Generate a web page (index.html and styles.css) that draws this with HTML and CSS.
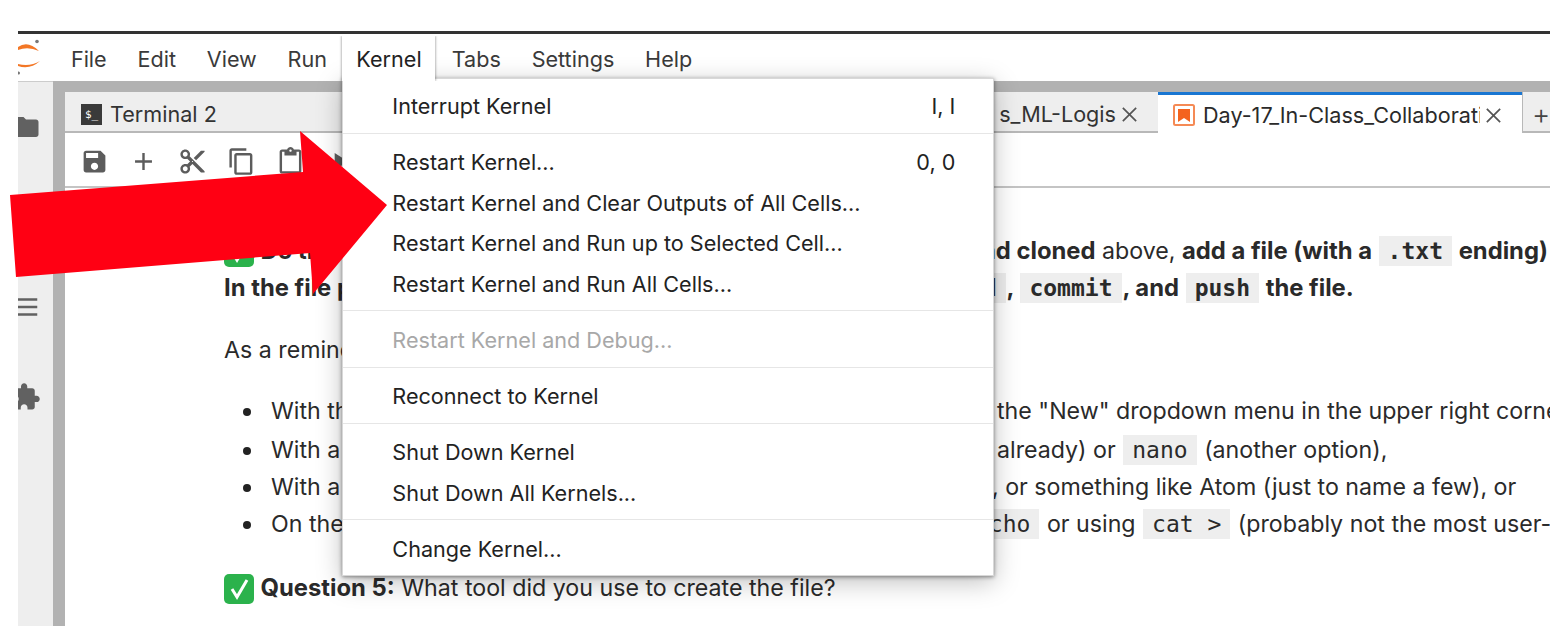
FILE: index.html
```html
<!DOCTYPE html>
<html lang="en">
<head>
<meta charset="utf-8">
<title>JupyterLab Kernel menu</title>
<link rel="stylesheet" href="styles.css">
</head>
<body>
<div class="page">
  <div class="app">
    <header class="menubar">
      <div class="logo">
        <svg viewBox="0 0 38 44" width="38" height="44">
          <path class="logo-arc" d="M0 11Q10 4 21 15Q10 10 0 14Z"/>
          <path class="logo-arc" d="M22 25Q12 34 0 30L0 28Q12 31 22 25Z"/>
          <circle class="logo-dot" cx="19" cy="5.5" r="1.8"/>
          <circle class="logo-dot" cx="0.5" cy="37" r="1.5"/>
        </svg>
      </div>
      <div class="menu-item">File</div>
      <div class="menu-item">Edit</div>
      <div class="menu-item">View</div>
      <div class="menu-item">Run</div>
      <div class="kernel">
        <div class="kernel-label">Kernel</div>
        <div class="dropdown">
          <div class="entry"><span>Interrupt Kernel</span><span>I, I</span></div>
          <div class="sep"></div>
          <div class="entry"><span>Restart Kernel...</span><span>0, 0</span></div>
          <div class="entry"><span>Restart Kernel and Clear Outputs of All Cells...</span></div>
          <div class="entry"><span>Restart Kernel and Run up to Selected Cell...</span></div>
          <div class="entry"><span>Restart Kernel and Run All Cells...</span></div>
          <div class="sep"></div>
          <div class="entry disabled"><span>Restart Kernel and Debug...</span></div>
          <div class="sep"></div>
          <div class="entry"><span>Reconnect to Kernel</span></div>
          <div class="sep"></div>
          <div class="entry"><span>Shut Down Kernel</span></div>
          <div class="entry"><span>Shut Down All Kernels...</span></div>
          <div class="sep"></div>
          <div class="entry"><span>Change Kernel...</span></div>
        </div>
      </div>
      <div class="menu-item">Tabs</div>
      <div class="menu-item">Settings</div>
      <div class="menu-item">Help</div>
    </header>
    <div class="workspace">
      <aside class="sidebar">
        <div class="side-slot"><svg class="side-icon" viewBox="0 0 24 24"><path d="M10 4H4c-1.1 0-1.99.9-1.99 2L2 18c0 1.1.9 2 2 2h16c1.1 0 2-.9 2-2V8c0-1.1-.9-2-2-2h-8l-2-2z"/></svg></div>
        <div class="side-slot"></div>
        <div class="side-slot"><svg class="side-icon" viewBox="0 0 24 24"><path d="M3 5h18v2H3zM3 11h18v2H3zM3 17h18v2H3z"/></svg></div>
        <div class="side-slot"><svg class="side-icon" viewBox="0 0 24 24"><path d="M20.5 11H19V7c0-1.1-.9-2-2-2h-4V3.5C13 2.12 11.88 1 10.5 1S8 2.12 8 3.5V5H4c-1.1 0-1.99.9-1.99 2v3.8H3.5c1.49 0 2.7 1.21 2.7 2.7s-1.21 2.7-2.7 2.7H2V20c0 1.1.9 2 2 2h3.8v-1.5c0-1.49 1.21-2.7 2.7-2.7 1.49 0 2.7 1.21 2.7 2.7V22H17c1.1 0 2-.9 2-2v-4h1.5c1.38 0 2.5-1.12 2.5-2.5S21.88 11 20.5 11z"/></svg></div>
      </aside>
      <main class="main">
        <div class="tabs">
          <div class="tab tab-terminal">
            <span class="term-icon">$_</span>
            <span>Terminal 2</span>
          </div>
          <div class="tab tab-middle">
            <span class="tab-name">s_ML-Logis</span>
            <svg class="tab-x" viewBox="0 0 20 20"><path d="M3 3l14 14M17 3L3 17"/></svg>
          </div>
          <div class="tab tab-active">
            <svg class="nb-icon" viewBox="0 0 22 22"><rect x="1" y="1" width="20" height="20" rx="1.5"/><path d="M5 5h12v13l-6-4-6 4z"/></svg>
            <span class="tab-active-name">Day-17_In-Class_Collaboration</span>
            <svg class="tab-x" viewBox="0 0 20 20"><path d="M3 3l14 14M17 3L3 17"/></svg>
          </div>
          <div class="tab tab-add">+</div>
        </div>
        <div class="toolbar">
          <svg class="tool" viewBox="0 0 24 24"><path d="M17 3H5c-1.11 0-2 .9-2 2v14c0 1.1.89 2 2 2h14c1.1 0 2-.9 2-2V7l-4-4zm-5 16c-1.66 0-3-1.34-3-3s1.34-3 3-3 3 1.34 3 3-1.34 3-3 3zm3-10H5V5h10v4z"/></svg>
          <svg class="tool" viewBox="0 0 24 24"><path d="M19 13h-6v6h-2v-6H5v-2h6V5h2v6h6v2z"/></svg>
          <svg class="tool" viewBox="0 0 24 24"><path d="M9.64 7.64c.23-.5.36-1.05.36-1.64 0-2.21-1.79-4-4-4S2 3.79 2 6s1.79 4 4 4c.59 0 1.14-.13 1.64-.36L10 12l-2.36 2.36C7.14 14.13 6.59 14 6 14c-2.21 0-4 1.79-4 4s1.79 4 4 4 4-1.79 4-4c0-.59-.13-1.14-.36-1.64L12 14l7 7h3v-1L9.64 7.64zM6 8c-1.1 0-2-.89-2-2s.9-2 2-2 2 .89 2 2-.9 2-2 2zm0 12c-1.1 0-2-.89-2-2s.9-2 2-2 2 .89 2 2-.9 2-2 2zm6-7.5c-.28 0-.5-.22-.5-.5s.22-.5.5-.5.5.22.5.5-.22.5-.5.5zM19 3l-6 6 2 2 7-7V3z"/></svg>
          <svg class="tool" viewBox="0 0 24 24"><path d="M16 1H4c-1.1 0-2 .9-2 2v14h2V3h12V1zm3 4H8c-1.1 0-2 .9-2 2v14c0 1.1.9 2 2 2h11c1.1 0 2-.9 2-2V7c0-1.1-.9-2-2-2zm0 16H8V7h11v14z"/></svg>
          <svg class="tool" viewBox="0 0 24 24"><path d="M19 2h-4.18C14.4.84 13.3 0 12 0c-1.3 0-2.4.84-2.82 2H5c-1.1 0-2 .9-2 2v16c0 1.1.9 2 2 2h14c1.1 0 2-.9 2-2V4c0-1.1-.9-2-2-2zm-7 0c.55 0 1 .45 1 1s-.45 1-1 1-1-.45-1-1 .45-1 1-1zm7 18H5V4h2v3h10V4h2v16z"/></svg>
          <svg class="tool" viewBox="0 0 24 24"><path d="M8 5v14l11-7z"/></svg>
        </div>
        <article class="content">
          <div class="line">
            <div class="left"><svg class="check" viewBox="0 0 30 30"><rect width="30" height="30" rx="5"/><path d="M8 15l5 8L23 6"/></svg> <b>Do this: Using the repository you created and</b></div>
            <div class="right off-a"><b>nd cloned</b> above, <b>add a file (with a <code>.txt</code> ending)</b></div>
          </div>
          <div class="line">
            <div class="left"><b>In the file pane, use the terminal to</b></div>
            <div class="right off-b"><b><code>add</code>, <code>commit</code>, and <code>push</code> the file.</b></div>
          </div>
          <p class="para">As a reminder, there are many ways to create a file:</p>
          <ul class="bullets">
            <li class="line sub">
              <div class="left">With the JupyterLab launcher, or by using</div>
              <div class="right off-c">the "New" dropdown menu in the upper right corner of the page</div>
            </li>
            <li class="line sub chip-line">
              <div class="left">With a command line editor like vim (if you know it</div>
              <div class="right off-d">already) or <code>nano</code> (another option),</div>
            </li>
            <li class="line sub">
              <div class="left">With a text editor on your computer like VS Code</div>
              <div class="right off-e">, or something like Atom (just to name a few), or</div>
            </li>
            <li class="line sub">
              <div class="left">On the command line, by printing text with</div>
              <div class="right off-f"><code>echo</code> or using <code>cat &gt;</code> (probably not the most user-friendly)</div>
            </li>
          </ul>
          <p class="para question"><svg class="check" viewBox="0 0 30 30"><rect width="30" height="30" rx="5"/><path d="M8 15l5 8L23 6"/></svg> <b>Question 5:</b> What tool did you use to create the file?</p>
        </article>
      </main>
    </div>
  </div>
  <svg class="arrow" viewBox="0 0 400 300" width="400" height="300"><path d="M10 195L303 172L300 131L387 205L313 294L310 253L16 277Z"/></svg>
</div>
</body>
</html>
```
FILE: styles.css
```css
* { box-sizing: border-box; }
html, body { margin: 0; padding: 0; background: #fff; }
.page {
  position: relative;
  width: 1550px;
  height: 626px;
  overflow: hidden;
  padding: 31px 0 0 18px;
  font-family: Inter, "Noto Sans", sans-serif;
  font-size: 21.6px;
  color: #2a2a2a;
}
.app {
  display: flex;
  flex-direction: column;
  height: 595px;
  border-top: 3px solid #333;
}
.menubar {
  display: flex;
  align-items: stretch;
  height: 47px;
  flex: none;
  padding-top: 2px;
  background: #fff;
  position: relative;
  z-index: 3;
}
.logo { width: 37.5px; flex: none; overflow: hidden; }
.logo svg { display: block; }
.logo-arc { fill: #f37726; }
.logo-dot { fill: #777; }
.menu-item { padding: 0 15.4px; line-height: 47px; color: #3a3a3a; }
.kernel {
  position: relative;
  width: 93px;
  flex: none;
  margin-right: 1px;
}
.kernel-label {
  position: relative;
  z-index: 2;
  height: 45px;
  padding-left: 14px;
  line-height: 47px;
  background: #fff;
  color: #222;
  box-shadow: -1px 0 2px rgba(0,0,0,.25), 1px 0 2px rgba(0,0,0,.25);
  clip-path: inset(0 -6px 0 -6px);
}
.dropdown {
  position: absolute;
  z-index: 1;
  top: 42px;
  left: 0;
  width: 652px;
  height: 498px;
  padding: 7px 0;
  background: #fff;
  border: 1px solid #d8d8d8;
  box-shadow: 0 1px 4px rgba(0,0,0,.45), 0 6px 24px rgba(0,0,0,.25);
  color: #222;
}
.entry {
  display: flex;
  justify-content: space-between;
  height: 40.6px;
  line-height: 40.6px;
  padding: 0 38px 0 49px;
}
.entry.disabled { color: #a8a8a8; }
.sep { height: 1px; margin: 6px 0 8.5px; background: #e6e6e6; }
.workspace { display: flex; flex: 1; min-height: 0; }
.sidebar {
  width: 35px;
  flex: none;
  background: #eee;
  overflow: hidden;
  border-top: 1px solid #ccc;
}
.side-slot { height: 90px; display: flex; align-items: center; margin-left: -7px; }
.side-icon { width: 30px; height: 30px; fill: #616161; }
.main {
  flex: 1;
  min-width: 0;
  background: #fff;
  border-left: 12px solid #b2b2b2;
  display: flex;
  flex-direction: column;
  overflow: hidden;
}
.tabs {
  display: flex;
  height: 52px;
  flex: none;
  padding-top: 11px;
  background: #b2b2b2;
}
.tab {
  display: flex;
  align-items: center;
  background: #eee;
  border-bottom: 2px solid #b8b8b8;
  height: 41px;
  padding-top: 5px;
}
.tab-terminal { width: 280px; padding-left: 16px; gap: 8px; color: #333; }
.term-icon {
  width: 21px;
  height: 21px;
  background: #3a3a3a;
  color: #fff;
  font: 11px/21px "DejaVu Sans Mono", monospace;
  text-align: center;
}
.tab-middle { flex: 1; justify-content: flex-end; gap: 4px; padding-right: 19px; color: #333; min-width: 0; }
.tab-x { width: 19px; height: 19px; fill: none; stroke: #555; stroke-width: 1.8; flex: none; }
.tab-active {
  width: 364px;
  height: 41px;
  background: #fff;
  border-top: 3px solid #1976d2;
  border-bottom: 0;
  padding: 2px 0 0 15px;
  flex: none;
}
.nb-icon { width: 22px; height: 22px; flex: none; margin-right: 8px; }
.nb-icon rect { fill: #fff; stroke: #f58a55; stroke-width: 2; }
.nb-icon path { fill: #f4631e; }
.tab-active-name { width: 277px; overflow: hidden; white-space: nowrap; flex: none; color: #2a2a2a; }
.tab-active .tab-x { margin-left: 4px; }
.tab-add {
  flex: none;
  width: 28px;
  padding-left: 9px;
  border-left: 1px solid #b8b8b8;
  font-size: 28px;
  font-weight: 300;
  color: #444;
}
.toolbar {
  display: flex;
  align-items: center;
  gap: 20px;
  height: 55px;
  flex: none;
  padding: 3px 0 0 15px;
  border-bottom: 2px solid #c4c4c4;
}
.tool { width: 29px; height: 29px; fill: #5c5c5c; flex: none; }
.content { padding: 44px 0 0 159px; color: #2a2a2a; font-size: 23.2px; }
.content b { font-size: 23.8px; }
.line {
  display: grid;
  grid-template-columns: 736px auto;
  height: 37px;
  line-height: 37px;
  white-space: nowrap;
}
.line.sub { grid-template-columns: 689px auto; }
.left { overflow: hidden; }
.right { min-width: 0; }
.off-a { margin-left: 21px; }
.off-b { margin-left: -15px; }
.off-c { margin-left: 37px; }
.off-d { margin-left: 37px; }
.off-e { margin-left: 32px; }
.off-f { margin-left: 5px; }
.para { margin: 26px 0 24px; height: 37px; line-height: 37px; white-space: nowrap; }
.bullets { margin: 0; padding: 0 0 0 47px; list-style: none; }
.bullets li { position: relative; }
.bullets li::before {
  content: "";
  position: absolute;
  left: -28px;
  top: 15px;
  width: 8px;
  height: 8px;
  border-radius: 50%;
  background: #222;
}
.chip-line { margin-top: 2px; }
.question { margin-top: 26px; }
.check { width: 30px; height: 30px; vertical-align: -8px; }
.check rect { fill: #2bb24c; }
.check path { fill: none; stroke: #fff; stroke-width: 3; }
code {
  font-family: "DejaVu Sans Mono", monospace;
  font-size: 23px;
  background: #eee;
  padding: 2px 9px;
  margin: 0 1px;
}
.arrow { position: absolute; left: 0; top: 0; z-index: 5; }
.arrow path { fill: #ff0013; }
```
